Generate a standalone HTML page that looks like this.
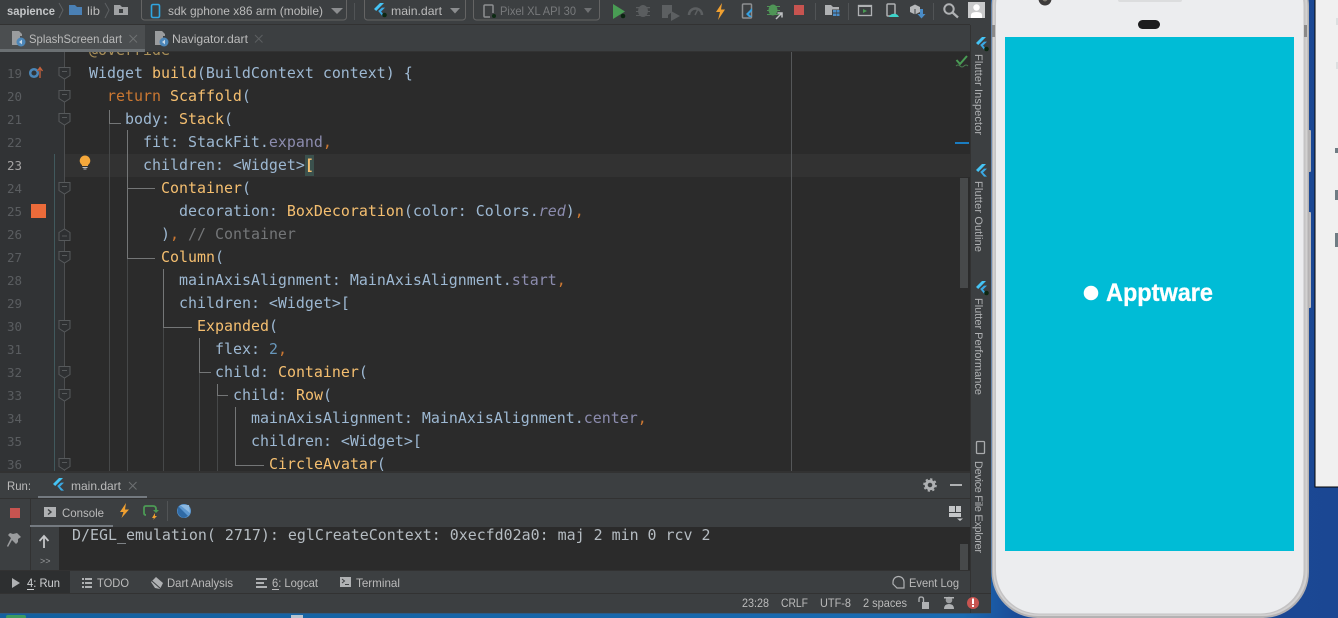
<!DOCTYPE html>
<html>
<head>
<meta charset="utf-8">
<title>Android Studio</title>
<style>
html,body{margin:0;padding:0;width:1338px;height:618px;overflow:hidden;background:#1b4a94}
svg{display:block}
.u{font-family:"Liberation Sans",sans-serif;font-size:12px;fill:#bbbbbb}
.v{font-family:"Liberation Sans",sans-serif;font-size:11px;fill:#afb1b3}
.c{font-family:"DejaVu Sans Mono",monospace;font-size:14.95px;fill:#9db8d2;white-space:pre}
.n{font-family:"DejaVu Sans Mono",monospace;font-size:12.5px;fill:#5a5d60}
.o{fill:#f5bf70}.k{fill:#cc7832}.p{fill:#8c8cae}.g{fill:#747678}.b{fill:#6897bb}.w{fill:#a9b7c6}
</style>
</head>
<body>
<svg width="1338" height="618" viewBox="0 0 1338 618" xmlns="http://www.w3.org/2000/svg">
<defs>
<clipPath id="ed"><rect x="0" y="52" width="970" height="420"/></clipPath>
<linearGradient id="desk" x1="0" x2="1" y1="0" y2="0"><stop offset="0" stop-color="#14609e"/><stop offset=".72" stop-color="#1a6bb2"/><stop offset=".76" stop-color="#1b4c98"/><stop offset="1" stop-color="#1b4793"/></linearGradient>
<g id="fl"><path d="M0 6 L6 0 H10 L2.2 8 Z" fill="#45c4f5"/><path d="M4.2 8 L8 4.6 H11 L7 8.6 L11 12.6 H8 Z" fill="#3aa9e4"/></g>
<g id="fd"><path d="M0 6 L6 0 H10 L2.2 8 Z" fill="#45c4f5"/><path d="M4.2 8 L8 4.6 H11 L7 8.6 L11 12.6 H8 Z" fill="#3aa9e4"/><circle cx="10.5" cy="12" r="2.3" fill="#0d2712"/></g>
<g id="fi"><path d="M0 5 V0 H7 L10 3 V5 Z M0 5 H8 V14 H0 Z" fill="#9a9c9e"/><circle cx="9" cy="11" r="4.5" fill="#4c86b8"/><path d="M7 11 L10 8.6 V13.4 Z" fill="#c8d8e6"/></g>
<g id="fold"><path d="M-5.5 -5.5 H5.5 V2.5 L0 6 L-5.5 2.5 Z M-2.5 -1.5 H2.5" fill="#2e3032" stroke="#56595b"/></g>
<g id="foldu"><path d="M-5.5 5.5 H5.5 V-2.5 L0 -6 L-5.5 -2.5 Z M-2.5 1 H2.5" fill="#2e3032" stroke="#56595b"/></g>
</defs>

<!-- desktop -->
<rect width="1338" height="618" fill="url(#desk)"/>
<rect x="6" y="615" width="20" height="4" rx="2" fill="#3d9a5e"/>
<rect x="291" y="615" width="12" height="3" fill="#b9c4ce"/>
<rect x="1315" y="-2" width="30" height="489" fill="#f0f0f0" stroke="#050505" stroke-width="1"/>
<g fill="#dcdfe0"><rect x="1336" y="18" width="2" height="7"/><rect x="1336" y="62" width="2" height="7"/></g>
<g fill="#6f7c84"><rect x="1335" y="148" width="3" height="5"/><rect x="1335" y="190" width="3" height="10"/><rect x="1335" y="233" width="3" height="14"/></g>

<!-- IDE frame -->
<rect x="0" y="0" width="991" height="613" fill="#3c3f41"/>
<rect x="0" y="24" width="970" height="1" fill="#323232"/>
<rect x="0" y="25" width="145" height="24" fill="#4b4e50"/>

<!-- breadcrumbs / toolbar -->
<text class="u" x="7" y="15" textLength="48" lengthAdjust="spacingAndGlyphs" style="font-weight:bold;fill:#c4c6c8">sapience</text>
<path d="M59 3 L63 10 L59 18" fill="none" stroke="#5d6063"/>
<path d="M69 5 H75 L77 7 H82 V15 H69 Z" fill="#4a80b5"/>
<text class="u" x="87" y="15" textLength="13" lengthAdjust="spacingAndGlyphs">lib</text>
<path d="M105 3 L109 10 L105 18" fill="none" stroke="#5d6063"/>
<path d="M114 5 H120 L122 7 H128 V15 H114 Z" fill="#a0a2a4"/><rect x="119" y="9" width="4" height="4" fill="#3c3f41"/>

<rect x="141.500" y="-3" width="205" height="23" rx="3" fill="none" stroke="#646464"/>
<rect x="151.500" y="4.500" width="8" height="13" rx="1.500" fill="none" stroke="#30a5e0" stroke-width="1.600"/>
<text class="u" x="168" y="15" textLength="155" lengthAdjust="spacingAndGlyphs">sdk gphone x86 arm (mobile)</text>
<path d="M331 8 H343 L337 14 Z" fill="#8b8d8f"/>
<rect x="354" y="3" width="1" height="17" fill="#515456"/>
<rect x="364.500" y="-3" width="101" height="23" rx="3" fill="none" stroke="#646464"/>
<use href="#fd" x="374" y="3"/>
<text class="u" x="391" y="15" textLength="51" lengthAdjust="spacingAndGlyphs">main.dart</text>
<path d="M450 8 H460 L455 13.500 Z" fill="#8b8d8f"/>
<rect x="473.500" y="-3" width="126" height="23" rx="3" fill="none" stroke="#646464"/>
<rect x="484" y="5" width="9" height="12" rx="1" fill="none" stroke="#8d8f91" stroke-width="1.500"/><rect x="490" y="13" width="6" height="5" fill="#3c3f41"/><circle cx="494" cy="16" r="2" fill="#0e2b14"/>
<text class="u" x="500" y="15" textLength="76" lengthAdjust="spacingAndGlyphs" style="fill:#787a7c">Pixel XL API 30</text>
<path d="M584 8 H592 L588 13 Z" fill="#6e7072"/>

<path d="M613 4 L625 11.500 L613 19 Z" fill="#499c54"/><circle cx="623" cy="16" r="2.300" fill="#0a2410"/>
<g fill="#5a5d5f"><ellipse cx="643" cy="11" rx="5" ry="6"/><path d="M636 7 H650 V8.200 H636 Z M636 11 H650 V12 H636 Z M636 15 H650 V16 H636 Z"/></g>
<path d="M662 5 H672 V12 L668 15 V18 H662 Z" fill="#5c5f61"/><path d="M671 11 L680 16 L671 21 Z" fill="#5c5f61"/>
<path d="M689 15 A6.500 6.500 0 0 1 702 15" fill="none" stroke="#5c5f61" stroke-width="2.500"/><path d="M695 15 L698 9" stroke="#5c5f61" stroke-width="1.500"/>
<path d="M722 3 L716 12 H720 L718 20 L725 9.500 H721 Z" fill="#f0a030"/>
<rect x="742.500" y="4" width="9" height="14" rx="1" fill="none" stroke="#8d8f91" stroke-width="1.500"/><path d="M746 14 L752 8 V11 L749 14 L752 17 H749 Z" fill="#35a0e0"/>
<g fill="#4f9556"><ellipse cx="773" cy="10" rx="4.500" ry="5.500"/><path d="M767 6 H780 V7 H767 Z M767 10 H780 V11 H767 Z M767 14 H780 V15 H767 Z"/></g><path d="M776 19 L782 13 M777.500 13 H782 V17.500" stroke="#bfc1c3" stroke-width="1.500" fill="none"/>
<rect x="794" y="5" width="10" height="10" fill="#c75450"/>
<rect x="815" y="3" width="1" height="17" fill="#515456"/>
<path d="M825 5 H831 L833 7 H839 V15 H825 Z" fill="#afb1b3"/><rect x="832" y="9.500" width="8" height="7" fill="#3c3f41"/><g fill="#4a8cc7"><rect x="833" y="10" width="3" height="2.500"/><rect x="836.500" y="10" width="3" height="2.500"/><rect x="833" y="13.500" width="3" height="2.500"/><rect x="836.500" y="13.500" width="3" height="2.500"/></g>
<rect x="848" y="3" width="1" height="17" fill="#515456"/>
<rect x="858.500" y="5.500" width="13" height="10" fill="none" stroke="#afb1b3" stroke-width="1.300"/><rect x="858" y="5" width="14" height="2" fill="#afb1b3"/><path d="M863 9 L867 11 L863 13 Z" fill="#499c54"/>
<rect x="887" y="4" width="8" height="12" rx="1" fill="none" stroke="#afb1b3" stroke-width="1.500"/><path d="M889 17 A5.500 5.500 0 0 1 899 17 Z" fill="#3dd3c9"/>
<path d="M910 7 L915 4.500 L920 7 V12 L915 14.500 L910 12 Z" fill="#b6b8ba"/><path d="M915 9 V14.500" stroke="#3c3f41"/><path d="M920 9 H923 V14 H925.500 L921.500 18.500 L917.500 14 H920 Z" fill="#4a8cc7"/>
<rect x="933" y="3" width="1" height="17" fill="#515456"/>
<circle cx="949" cy="9" r="4.700" fill="none" stroke="#afb1b3" stroke-width="2"/><path d="M952.500 12.500 L958 17.500" stroke="#afb1b3" stroke-width="2.300"/>
<rect x="968" y="2" width="17" height="16" fill="#c9cacb"/><circle cx="976.500" cy="7.500" r="3.200" fill="#fff"/><path d="M971 18 V15 Q971 12 976.500 12 Q982 12 982 15 V18 Z" fill="#fff"/>

<!-- tabs -->
<use href="#fi" x="12" y="31"/>
<text class="u" x="29" y="43" textLength="93" lengthAdjust="spacingAndGlyphs">SplashScreen.dart</text>
<path d="M129.500 35 L137 42.500 M137 35 L129.500 42.500" stroke="#6d7072"/>
<use href="#fi" x="155" y="31"/>
<text class="u" x="172" y="43" textLength="76" lengthAdjust="spacingAndGlyphs">Navigator.dart</text>
<path d="M255 35 L262.500 42.500 M262.500 35 L255 42.500" stroke="#5c5f61"/>
<rect x="0" y="49" width="145" height="3" fill="#6b7073"/>
<rect x="145" y="51" width="825" height="1" fill="#323232"/>

<!-- editor -->
<rect x="0" y="52" width="970" height="420" fill="#2b2b2b"/>
<rect x="0" y="52" width="65" height="420" fill="#313335"/>
<rect x="65" y="154" width="905" height="23" fill="#323232"/>

<!-- guides -->
<g fill="#464849">
<rect x="109" y="124" width="1" height="348"/>
<rect x="199" y="373" width="1" height="99"/>
<rect x="217" y="396" width="1" height="76"/>
<rect x="163" y="327" width="1" height="145"/>
<rect x="127" y="258" width="1" height="214"/>
</g>
<g fill="#747677">
<rect x="109" y="110" width="1" height="14"/><rect x="109" y="123" width="12" height="1"/>
<rect x="127" y="130" width="1" height="128"/><rect x="127" y="188" width="28" height="1"/><rect x="127" y="258" width="28" height="1"/>
<rect x="163" y="269" width="1" height="58"/><rect x="163" y="327" width="29" height="1"/>
<rect x="199" y="338" width="1" height="35"/><rect x="199" y="372" width="12" height="1"/>
<rect x="217" y="384" width="1" height="12"/><rect x="217" y="395" width="11" height="1"/>
<rect x="235" y="407" width="1" height="58"/><rect x="235" y="465" width="29" height="1"/>
</g>
<rect x="791" y="52" width="1" height="420" fill="#555759"/>
<rect x="54" y="154" width="1" height="318" fill="#41595d"/>
<rect x="64" y="52" width="1" height="420" fill="#4c4e50"/>

<!-- gutter -->
<text class="n" x="7" y="78">19</text><text class="n" x="7" y="101">20</text><text class="n" x="7" y="124">21</text><text class="n" x="7" y="147">22</text>
<text class="n" x="7" y="170" style="fill:#a4a3a3">23</text><text class="n" x="7" y="193">24</text><text class="n" x="7" y="216">25</text><text class="n" x="7" y="239">26</text>
<text class="n" x="7" y="262">27</text><text class="n" x="7" y="285">28</text><text class="n" x="7" y="308">29</text><text class="n" x="7" y="331">30</text>
<text class="n" x="7" y="354">31</text><text class="n" x="7" y="377">32</text><text class="n" x="7" y="400">33</text><text class="n" x="7" y="423">34</text>
<text class="n" x="7" y="446">35</text><text class="n" x="7" y="469">36</text>
<circle cx="34" cy="73" r="3.800" fill="none" stroke="#4a86b8" stroke-width="2.500"/>
<path d="M40 78 V68 M37.500 71 L40 67.500 L42.500 71" stroke="#c6623c" stroke-width="1.300" fill="none"/>
<rect x="31" y="204" width="15" height="14" fill="#eb6b3a"/>
<use href="#fold" x="64.500" y="73"/><use href="#fold" x="64.500" y="96"/><use href="#fold" x="64.500" y="119"/>
<use href="#fold" x="64.500" y="188"/><use href="#foldu" x="64.500" y="235"/><use href="#fold" x="64.500" y="257"/>
<use href="#fold" x="64.500" y="326"/><use href="#fold" x="64.500" y="372"/><use href="#fold" x="64.500" y="395"/><use href="#fold" x="64.500" y="464"/>

<!-- lightbulb + bracket highlight -->
<path d="M85 155.500 A5.200 5.200 0 0 1 88 165 V166 H82 V165 A5.200 5.200 0 0 1 85 155.500 Z" fill="#f5a83b"/>
<path d="M82.500 167.500 H87.500 M83.500 169 H86.500" stroke="#bdbdbd"/>
<rect x="305" y="155" width="9" height="21" fill="#3b514d"/>

<!-- code -->
<text class="c" x="89" y="55" clip-path="url(#ed)" style="fill:#a98f58">@override</text>
<text class="c" x="89" y="78">Widget <tspan class="o">build</tspan>(BuildContext context) {</text>
<text class="c" x="107" y="101"><tspan class="k">return</tspan> <tspan class="o">Scaffold</tspan>(</text>
<text class="c" x="125" y="124">body: <tspan class="o">Stack</tspan>(</text>
<text class="c" x="143" y="147">fit: StackFit.<tspan class="p">expand</tspan><tspan class="k">,</tspan></text>
<text class="c" x="143" y="170">children: &lt;Widget&gt;<tspan class="o" style="font-weight:bold">[</tspan></text>
<text class="c" x="161" y="193"><tspan class="o">Container</tspan>(</text>
<text class="c" x="179" y="216">decoration: <tspan class="o">BoxDecoration</tspan>(color: Colors.<tspan class="p" style="font-style:italic">red</tspan>)<tspan class="k">,</tspan></text>
<text class="c" x="161" y="239">)<tspan class="k">,</tspan> <tspan class="g">// Container</tspan></text>
<text class="c" x="161" y="262"><tspan class="o">Column</tspan>(</text>
<text class="c" x="179" y="285">mainAxisAlignment: MainAxisAlignment.<tspan class="p">start</tspan><tspan class="k">,</tspan></text>
<text class="c" x="179" y="308">children: &lt;Widget&gt;[</text>
<text class="c" x="197" y="331"><tspan class="o">Expanded</tspan>(</text>
<text class="c" x="215" y="354">flex: <tspan class="b">2</tspan><tspan class="k">,</tspan></text>
<text class="c" x="215" y="377">child: <tspan class="o">Container</tspan>(</text>
<text class="c" x="233" y="400">child: <tspan class="o">Row</tspan>(</text>
<text class="c" x="251" y="423">mainAxisAlignment: MainAxisAlignment.<tspan class="p">center</tspan><tspan class="k">,</tspan></text>
<text class="c" x="251" y="446">children: &lt;Widget&gt;[</text>
<text class="c" x="269" y="469"><tspan class="o">CircleAvatar</tspan>(</text>

<!-- editor right marks -->
<path d="M956.500 60 L960 64 L967 56" fill="none" stroke="#499c54" stroke-width="2"/>
<path d="M956 66 Q958 64 960 66 T964 66 T968 66" fill="none" stroke="#4a7a4f"/>
<rect x="955" y="142" width="14" height="2" fill="#1a7cc0"/>
<rect x="960" y="178" width="8" height="110" fill="#47494a"/>

<!-- right tool strip -->
<rect x="970" y="25" width="1" height="588" fill="#323232"/>
<use href="#fd" x="976" y="37"/>
<text class="v" transform="translate(975,54) rotate(90)" x="0" y="0" textLength="81" lengthAdjust="spacing">Flutter Inspector</text>
<use href="#fl" x="976" y="164"/>
<text class="v" transform="translate(975,181) rotate(90)" x="0" y="0" textLength="71" lengthAdjust="spacing">Flutter Outline</text>
<use href="#fd" x="976" y="281"/>
<text class="v" transform="translate(975,298) rotate(90)" x="0" y="0" textLength="97" lengthAdjust="spacing">Flutter Performance</text>
<rect x="976.500" y="441.500" width="8" height="12" rx="1" fill="none" stroke="#a9abad" stroke-width="1.300"/>
<text class="v" transform="translate(975,461) rotate(90)" x="0" y="0" textLength="92" lengthAdjust="spacing">Device File Explorer</text>

<!-- run panel -->
<rect x="0" y="471" width="970" height="2" fill="#323232"/>
<rect x="0" y="473" width="970" height="98" fill="#3c3f41"/>
<text class="u" x="7" y="490" textLength="24" lengthAdjust="spacingAndGlyphs">Run:</text>
<use href="#fl" x="53" y="478"/>
<text class="u" x="71" y="490" textLength="50" lengthAdjust="spacingAndGlyphs">main.dart</text>
<path d="M129 482 L136.500 489.500 M136.500 482 L129 489.500" stroke="#6d7072"/>
<rect x="38" y="496" width="109" height="2.500" fill="#747a80"/>
<rect x="0" y="498" width="970" height="1" fill="#323232"/>
<circle cx="930" cy="485" r="3.800" fill="none" stroke="#afb1b3" stroke-width="3"/><circle cx="930" cy="485" r="6" fill="none" stroke="#afb1b3" stroke-width="1.600" stroke-dasharray="2.300 2.400"/>
<rect x="950" y="484" width="12" height="2" fill="#afb1b3"/>

<rect x="30" y="499" width="1" height="72" fill="#323232"/>
<rect x="10" y="508" width="10" height="10" fill="#c75450"/>
<path d="M17 533 L21 537 L18 539 L18 542 L16 544 L12 540 L8 547 L7 546 L11 538 L8 535 L10 533 L13 534 Z" fill="#9a9c9e"/>
<rect x="44" y="507" width="12" height="10" fill="#afb1b3"/><path d="M48 509.500 L51 512 L48 514.500" fill="none" stroke="#3c3f41" stroke-width="1.400"/>
<text class="u" x="62" y="517" textLength="42" lengthAdjust="spacingAndGlyphs">Console</text>
<rect x="30" y="525" width="83" height="2" fill="#747a80"/>
<path d="M126 503 L120 512 H123.500 L121.500 518 L129 509.500 H125 Z" fill="#f0a030"/>
<path d="M146 515 Q144 515 144 513 V508 Q144 506 146 506 H153 Q156 506 156 509 V511" fill="none" stroke="#4c9a55" stroke-width="1.800"/><path d="M153 510 H159 L156 513 Z" fill="#4c9a55"/><path d="M155 513 L152 518 H154 L153 520 L157 516 H155 Z" fill="#f0a030"/>
<rect x="167" y="501" width="1" height="20" fill="#515456"/>
<circle cx="184" cy="511" r="7" fill="#5d98d0"/><path d="M178 506 L188 516 L184 518 Q179 517 177.500 512 Z" fill="#2f6aa5"/><path d="M180 505 L189 505 L190 513 Z" fill="#8cb8e0"/>
<g fill="#c4c6c8"><rect x="949" y="506" width="6" height="6"/><rect x="956" y="506" width="5" height="6"/><rect x="949" y="513" width="12" height="4"/></g><path d="M957 518.500 H963 L960 521 Z" fill="#c4c6c8"/>

<rect x="59" y="527" width="911" height="43" fill="#2b2b2b"/>
<rect x="0" y="527" width="30" height="1" fill="#3c3f41"/>
<path d="M44 548 V536 M39.500 541 L44 536 L48.500 541" fill="none" stroke="#c4c6c8" stroke-width="1.800"/>
<text class="u" x="40" y="564" style="font-size:9px;fill:#9a9c9e">&gt;&gt;</text>
<text class="c" x="72" y="540" style="fill:#b5bcc2">D/EGL_emulation( 2717): eglCreateContext: 0xecfd02a0: maj 2 min 0 rcv 2</text>
<rect x="960" y="544" width="8" height="26" fill="#47494a"/>

<!-- tool bar -->
<rect x="0" y="570" width="970" height="1" fill="#323232"/>
<rect x="0" y="571" width="70" height="22" fill="#2d2f30"/>
<path d="M12 578 L20 583 L12 588 Z" fill="#afb1b3"/>
<text class="u" x="27" y="587" textLength="33" lengthAdjust="spacingAndGlyphs" style="fill:#cfd1d3">4: Run</text><rect x="27" y="589" width="7" height="1" fill="#cfd1d3"/>
<g fill="#afb1b3"><rect x="82" y="578" width="2" height="2"/><rect x="85" y="578" width="7" height="2"/><rect x="82" y="582" width="2" height="2"/><rect x="85" y="582" width="7" height="2"/><rect x="82" y="586" width="2" height="2"/><rect x="85" y="586" width="7" height="2"/></g>
<text class="u" x="97" y="587" textLength="32" lengthAdjust="spacingAndGlyphs">TODO</text>
<path d="M151 582 L156 577 L163 583 L160 589 L155 588 Z" fill="#afb1b3"/><path d="M152 581 L161 589" stroke="#3c3f41"/>
<text class="u" x="167" y="587" textLength="66" lengthAdjust="spacingAndGlyphs">Dart Analysis</text>
<g fill="#afb1b3"><rect x="256" y="578" width="11" height="2"/><rect x="256" y="582" width="8" height="2"/><rect x="256" y="586" width="11" height="2"/></g>
<text class="u" x="272" y="587" textLength="46" lengthAdjust="spacingAndGlyphs">6: Logcat</text><rect x="272" y="589" width="7" height="1" fill="#bbbbbb"/>
<rect x="340" y="577" width="11" height="10" fill="#afb1b3"/><path d="M342 579 L344.500 581 L342 583 M345 584.500 H349" fill="none" stroke="#3c3f41"/>
<text class="u" x="356" y="587" textLength="44" lengthAdjust="spacingAndGlyphs">Terminal</text>
<path d="M897 588 H904 V582 A5.500 5.500 0 1 0 893 582 V584 Z" fill="none" stroke="#afb1b3" stroke-width="1.200"/>
<text class="u" x="909" y="587" textLength="50" lengthAdjust="spacingAndGlyphs">Event Log</text>

<!-- status bar -->
<rect x="0" y="593" width="991" height="1" fill="#323232"/>
<text class="u" x="742" y="607" textLength="27" lengthAdjust="spacingAndGlyphs">23:28</text>
<text class="u" x="781" y="607" textLength="27" lengthAdjust="spacingAndGlyphs">CRLF</text>
<text class="u" x="820" y="607" textLength="31" lengthAdjust="spacingAndGlyphs">UTF-8</text>
<text class="u" x="863" y="607" textLength="44" lengthAdjust="spacingAndGlyphs">2 spaces</text>
<rect x="922" y="602" width="7" height="7" fill="#afb1b3"/><path d="M919 602 V599 Q919 597 921 597 Q923.500 597 923.500 599 V602" fill="none" stroke="#afb1b3" stroke-width="1.300"/>
<circle cx="949" cy="600" r="3.300" fill="#9a9c9e"/><rect x="944" y="597" width="10" height="1.500" fill="#afb1b3"/><path d="M944 609 Q944 604 949 604 Q954 604 954 609 Z" fill="#afb1b3"/>
<circle cx="973" cy="603" r="6" fill="#c75450"/><rect x="972" y="598.500" width="2" height="5.500" fill="#fff"/><rect x="972" y="605" width="2" height="2" fill="#fff"/>
<rect x="0" y="613" width="991" height="1" fill="#2a5a86"/>

<!-- phone -->
<rect x="1306" y="130" width="5" height="42" rx="1" fill="#b5b3b3"/>
<rect x="1306" y="212" width="5" height="96" rx="1" fill="#bdbaba"/>
<rect x="991.500" y="-40" width="317.500" height="658" rx="46" fill="#b4b2b3"/>
<rect x="993" y="-39" width="314.500" height="655" rx="45" fill="#d2d1d1"/>
<rect x="994.500" y="-38" width="311" height="652.500" rx="44" fill="#c4c3c4"/>
<rect x="996" y="-37" width="307.500" height="650.500" rx="43" fill="#ecedef"/>
<rect x="1304" y="25" width="3" height="12" fill="#8a8989"/>
<rect x="992" y="25" width="3" height="12" fill="#8a8989"/>
<circle cx="1045" cy="-1" r="6.500" fill="#3d3b3b"/><circle cx="1045" cy="-1" r="2.500" fill="#7d7a70"/>
<rect x="1118" y="-3" width="64" height="5" rx="2" fill="#dcddde"/>
<rect x="1138" y="20" width="22" height="9" rx="4.500" fill="#1d1d1e"/>
<rect x="1005" y="37" width="289" height="514" fill="#00bcd6"/>
<circle cx="1091" cy="293" r="7.300" fill="#ffffff"/>
<text x="1106" y="301" textLength="107" lengthAdjust="spacingAndGlyphs" style="font-family:'Liberation Sans',sans-serif;font-weight:bold;font-size:25px;fill:#ffffff;stroke:#ffffff;stroke-width:.3px">Apptware</text>
</svg>
</body>
</html>
